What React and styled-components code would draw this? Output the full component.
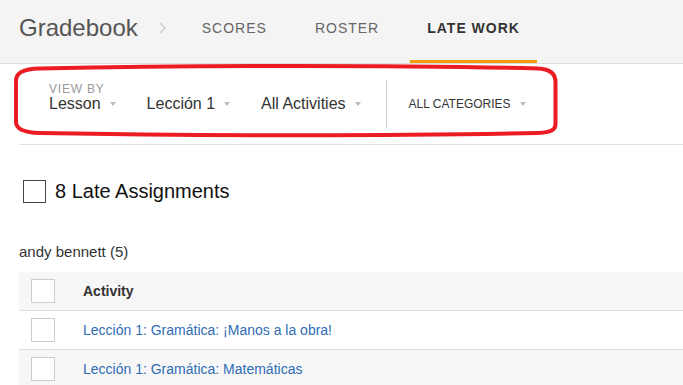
import React from 'react';
import styled, { createGlobalStyle } from 'styled-components';

const GlobalStyle = createGlobalStyle`
  html, body { margin: 0; padding: 0; background: #fff; }
  body { font-family: "Liberation Sans", Arial, sans-serif; color: #333; }
  * { box-sizing: border-box; }
`;

const Page = styled.div`
  position: relative;
  width: 683px;
  height: 385px;
  overflow: hidden;
`;

const Header = styled.header`
  display: flex;
  align-items: stretch;
  height: 64px;
  padding-left: 19px;
  background: #f4f4f4;
  border-bottom: 1px solid #dedede;
`;

const Brand = styled.div`
  display: flex;
  align-items: center;
  padding-bottom: 7px;
  font-size: 24px;
  color: #555;
`;

const Crumb = styled.div`
  display: flex;
  align-items: center;
  padding: 0 11px 7px 21px;
`;

const Tab = styled.div`
  display: flex;
  align-items: center;
  margin: 0 6px 0 8px;
  padding: 0 17px 4px;
  font-size: 14px;
  letter-spacing: 1px;
  color: ${p => (p.$active ? '#333' : '#666')};
  font-weight: ${p => (p.$active ? 'bold' : 'normal')};
  border-bottom: 3px solid ${p => (p.$active ? '#f29b0c' : 'transparent')};
`;

const Content = styled.main`
  padding-left: 19px;
`;

const FilterBar = styled.div`
  display: flex;
  align-items: center;
  height: 81px;
  padding-left: 30px;
  border-bottom: 1px solid #e2e2e2;
`;

const FieldGroup = styled.div`
  display: flex;
  flex-direction: column;
  padding-bottom: 12px;
`;

const FieldLabel = styled.div`
  font-size: 12px;
  line-height: 12px;
  letter-spacing: 0.8px;
  color: #999;
`;

const Dropdown = styled.div`
  display: flex;
  align-items: center;
  gap: 9px;
  margin-right: ${p => p.$gap}px;
  font-size: ${p => (p.$small ? 12 : 16)}px;
  line-height: 18px;
  color: #333;
`;

const Caret = styled.span`
  width: 0;
  height: 0;
  border-left: 3px solid transparent;
  border-right: 3px solid transparent;
  border-top: 4px solid #bbb;
`;

const Divider = styled.div`
  width: 1px;
  height: 48px;
  margin-right: 22px;
  background: #ccc;
`;

const TitleRow = styled.div`
  display: flex;
  align-items: center;
  gap: 9px;
  margin: 35px 0 0 4px;
  height: 23px;
  font-size: 20px;
  color: #111;
`;

const Box = styled.span`
  display: block;
  width: ${p => p.$size}px;
  height: ${p => p.$size}px;
  background: #fff;
  border: 1px solid ${p => p.$color};
`;

const Student = styled.div`
  margin-top: 40px;
  font-size: 15px;
  line-height: 18px;
  color: #333;
`;

const Table = styled.div`
  margin-top: 11px;
`;

const Row = styled.div`
  display: grid;
  grid-template-columns: 64px 1fr;
  align-items: center;
  height: 39px;
  padding-bottom: 1px;
  background: ${p => (p.$shade ? '#f7f7f7' : '#fff')};
  border-bottom: 1px solid #dedede;
  font-size: 14px;
`;

const Cell = styled.div`
  padding-left: ${p => p.$pad || 0}px;
`;

const HeadText = styled.span`
  font-weight: bold;
  color: #333;
`;

const LinkText = styled.a`
  color: #2f6db5;
  text-decoration: none;
`;

const Annotation = styled.svg`
  position: absolute;
  left: 0;
  top: 0;
  pointer-events: none;
`;

const assignments = [
  'Lección 1: Gramática: ¡Manos a la obra!',
  'Lección 1: Gramática: Matemáticas',
];

export default function App() {
  return (
    <Page>
      <GlobalStyle />
      <Header>
        <Brand>Gradebook</Brand>
        <Crumb>
          <svg width="7" height="12" viewBox="0 0 7 12">
            <polyline points="1,1 6,6 1,11" fill="none" stroke="#ccc" strokeWidth="1.3" />
          </svg>
        </Crumb>
        <Tab>SCORES</Tab>
        <Tab>ROSTER</Tab>
        <Tab $active>LATE WORK</Tab>
      </Header>
      <Content>
        <FilterBar>
          <FieldGroup>
            <FieldLabel>VIEW BY</FieldLabel>
            <Dropdown $gap={31}>Lesson<Caret /></Dropdown>
          </FieldGroup>
          <Dropdown $gap={31}>Lección 1<Caret /></Dropdown>
          <Dropdown $gap={25}>All Activities<Caret /></Dropdown>
          <Divider />
          <Dropdown $small $gap={0}>ALL CATEGORIES<Caret /></Dropdown>
        </FilterBar>
        <TitleRow>
          <Box $size={23} $color="#444" />
          8 Late Assignments
        </TitleRow>
        <Student>andy bennett (5)</Student>
        <Table>
          <Row $shade>
            <Cell $pad={12}><Box $size={24} $color="#ccc" /></Cell>
            <Cell><HeadText>Activity</HeadText></Cell>
          </Row>
          {assignments.map((name, i) => (
            <Row key={name} $shade={i % 2 === 1}>
              <Cell $pad={12}><Box $size={24} $color="#ccc" /></Cell>
              <Cell><LinkText href="#">{name}</LinkText></Cell>
            </Row>
          ))}
        </Table>
      </Content>
      <Annotation width="683" height="385">
        <path
          d="M 40 68.5 C 200 65, 400 65, 538 68.5 C 551 69, 555.5 74, 555.5 82 L 555.5 124 C 555.5 130, 551 132.5, 538 133 C 400 136, 200 136, 40 133 C 22 132.5, 16 128, 16 122 L 16 81 C 16 73, 22 69, 40 68.5 Z"
          fill="none"
          stroke="#ec1c24"
          strokeWidth="4"
        />
      </Annotation>
    </Page>
  );
}
